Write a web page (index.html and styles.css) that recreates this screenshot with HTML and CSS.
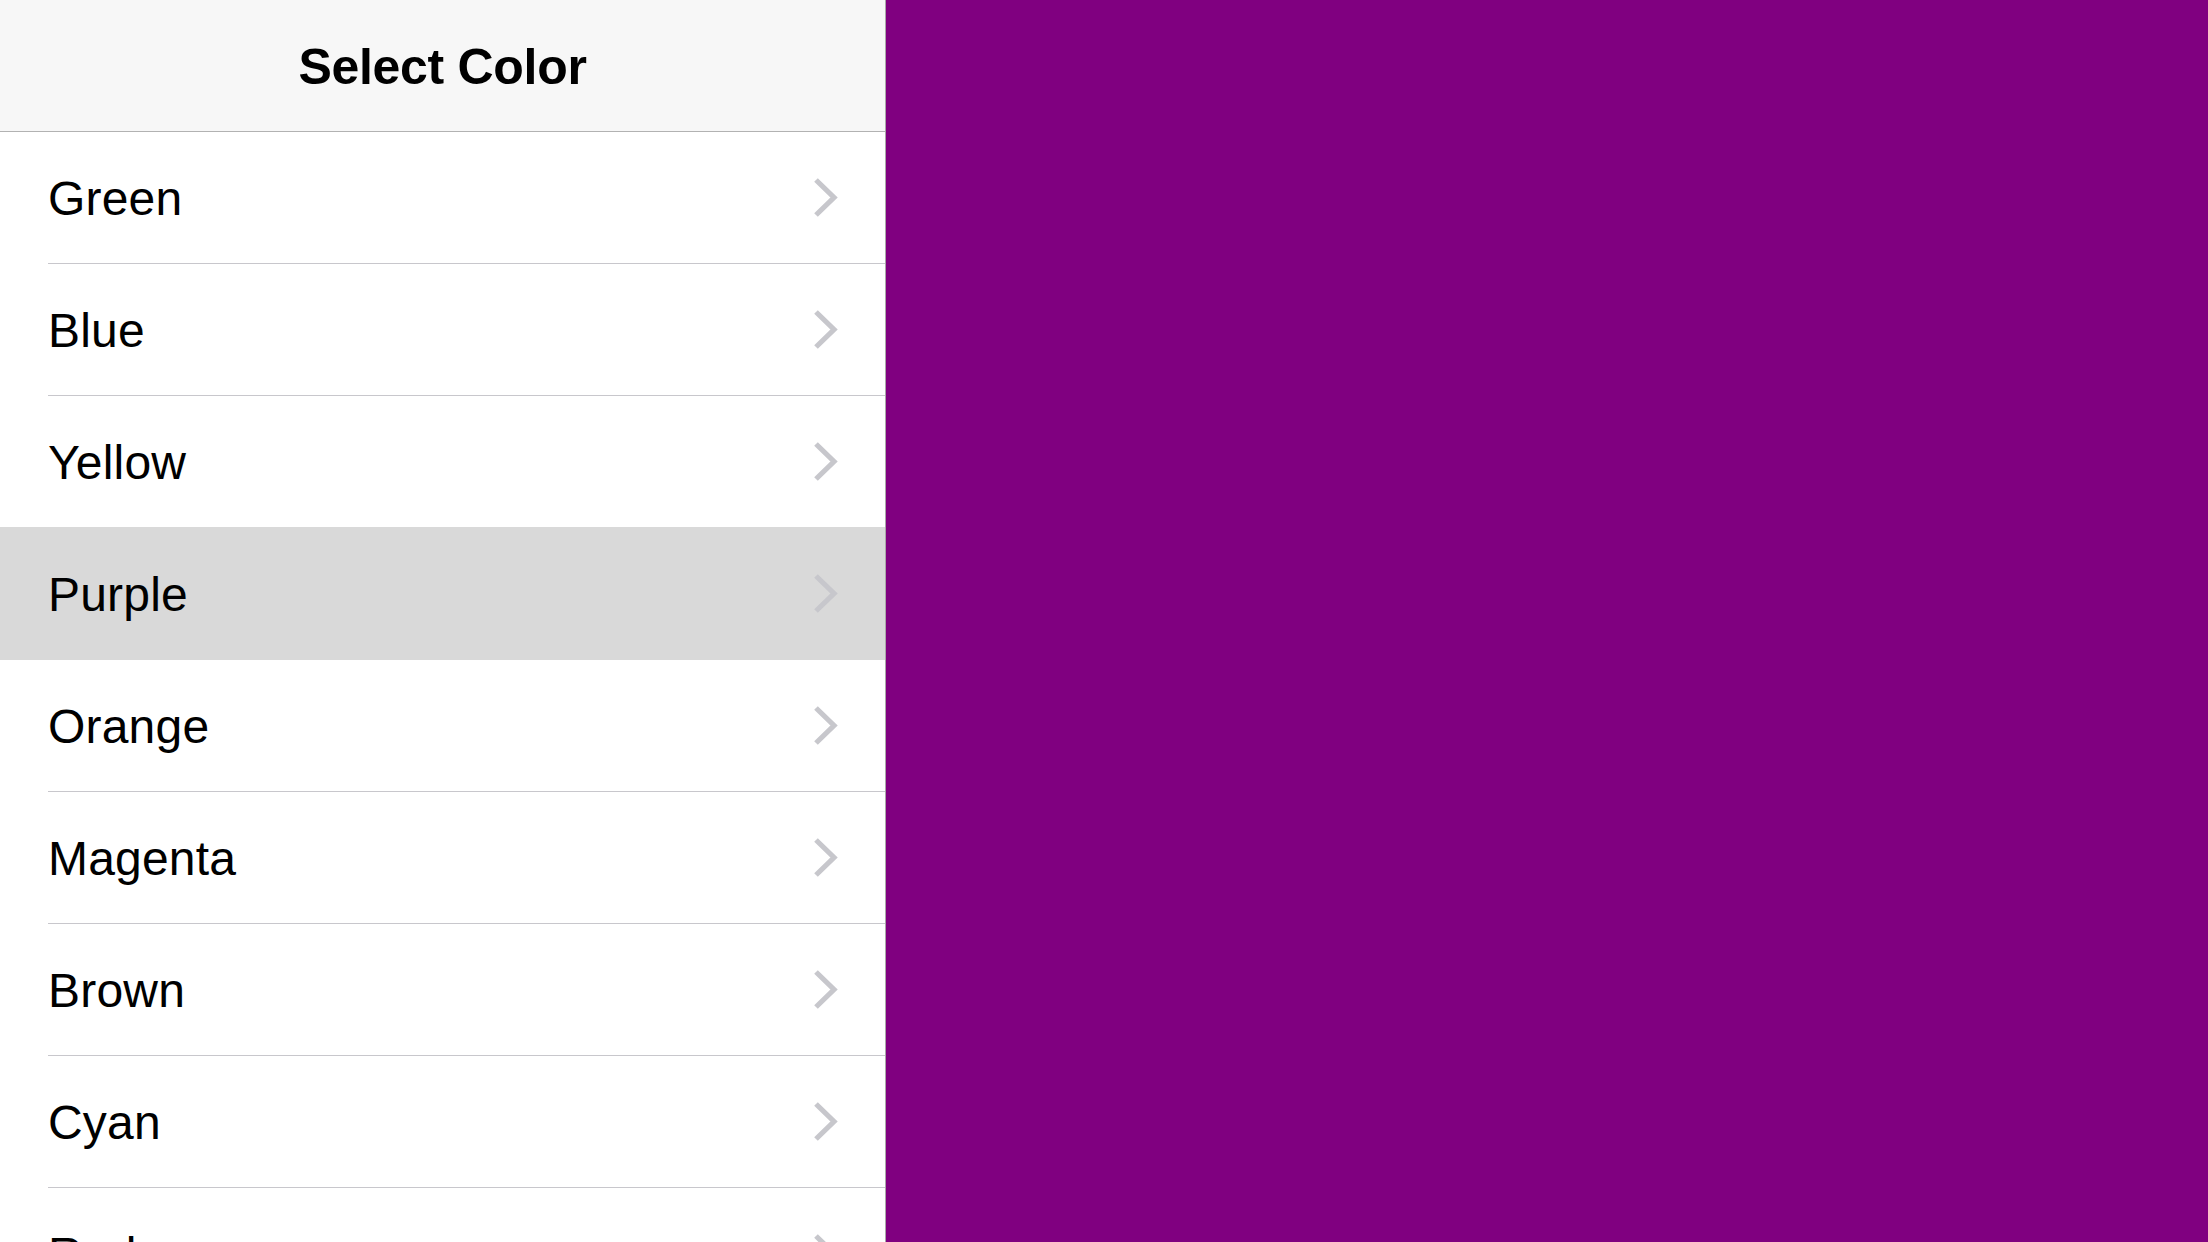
FILE: index.html
```html
<!DOCTYPE html>
<html lang="en">
<head>
<meta charset="utf-8">
<title>Select Color</title>
<link rel="stylesheet" href="styles.css">
</head>
<body>
<div class="app">
  <aside class="sidebar">
    <header class="navbar"><h1 class="title">Select Color</h1></header>
    <ul class="list">
      <li class="row"><div class="row-inner"><span class="label">Green</span><svg class="chev" viewBox="0 0 28 40" width="28" height="40"><polyline points="5,2 23,19.5 5,37"/></svg></div></li>
      <li class="row"><div class="row-inner"><span class="label">Blue</span><svg class="chev" viewBox="0 0 28 40" width="28" height="40"><polyline points="5,2 23,19.5 5,37"/></svg></div></li>
      <li class="row"><div class="row-inner"><span class="label">Yellow</span><svg class="chev" viewBox="0 0 28 40" width="28" height="40"><polyline points="5,2 23,19.5 5,37"/></svg></div></li>
      <li class="row selected"><div class="row-inner"><span class="label">Purple</span><svg class="chev" viewBox="0 0 28 40" width="28" height="40"><polyline points="5,2 23,19.5 5,37"/></svg></div></li>
      <li class="row"><div class="row-inner"><span class="label">Orange</span><svg class="chev" viewBox="0 0 28 40" width="28" height="40"><polyline points="5,2 23,19.5 5,37"/></svg></div></li>
      <li class="row"><div class="row-inner"><span class="label">Magenta</span><svg class="chev" viewBox="0 0 28 40" width="28" height="40"><polyline points="5,2 23,19.5 5,37"/></svg></div></li>
      <li class="row"><div class="row-inner"><span class="label">Brown</span><svg class="chev" viewBox="0 0 28 40" width="28" height="40"><polyline points="5,2 23,19.5 5,37"/></svg></div></li>
      <li class="row"><div class="row-inner"><span class="label">Cyan</span><svg class="chev" viewBox="0 0 28 40" width="28" height="40"><polyline points="5,2 23,19.5 5,37"/></svg></div></li>
      <li class="row"><div class="row-inner"><span class="label">Red</span><svg class="chev" viewBox="0 0 28 40" width="28" height="40"><polyline points="5,2 23,19.5 5,37"/></svg></div></li>
    </ul>
  </aside>
  <main class="detail"></main>
</div>
</body>
</html>
```
FILE: styles.css
```css
html, body {
  margin: 0;
  padding: 0;
  height: 100%;
  overflow: hidden;
}

body {
  font-family: "Liberation Sans", Arial, Helvetica, sans-serif;
  color: #000;
  background: #fff;
}

.app {
  display: flex;
  width: 2208px;
  height: 1242px;
}

.sidebar {
  width: 885px;
  flex: 0 0 885px;
  border-right: 1px solid #a9a9a9;
  background: #fff;
  overflow: hidden;
  display: flex;
  flex-direction: column;
}

.navbar {
  height: 132px;
  flex: 0 0 132px;
  box-sizing: border-box;
  background: #f7f7f7;
  border-bottom: 1px solid #b2b2b2;
  display: flex;
  align-items: center;
  justify-content: center;
}

.title {
  margin: 0;
  font-size: 50px;
  font-weight: 700;
  line-height: 1;
  letter-spacing: -0.3px;
  padding-top: 2px;
}

.list {
  list-style: none;
  margin: 0;
  padding: 0;
}

.row {
  height: 132px;
  box-sizing: border-box;
  padding-left: 48px;
  background: #fff;
}

.row.selected {
  background: #d9d9d9;
  margin-top: -1px;
  height: 133px;
  padding-top: 1px;
}

.row-inner {
  height: 100%;
  box-sizing: border-box;
  display: flex;
  align-items: center;
  justify-content: space-between;
  padding-right: 46px;
  border-bottom: 1px solid #c8c7cc;
}

.row.selected .row-inner {
  border-bottom-color: transparent;
}

.label {
  font-size: 48px;
  line-height: 1;
  padding-top: 3px;
  letter-spacing: 0.2px;
}

.chev {
  display: block;
  flex: 0 0 auto;
}

.chev polyline {
  fill: none;
  stroke: #c7c7cc;
  stroke-width: 5.2;
  stroke-linejoin: miter;
  stroke-linecap: butt;
}

.detail {
  flex: 1 1 auto;
  background: #800080;
}
```
